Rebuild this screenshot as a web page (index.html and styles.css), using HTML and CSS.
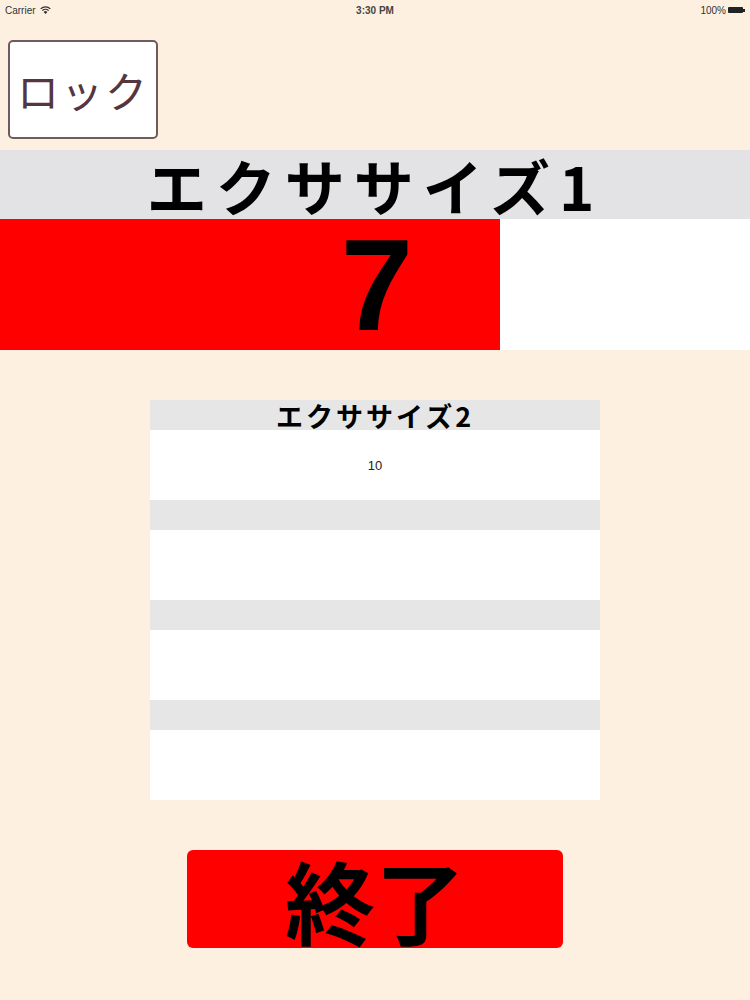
FILE: index.html
```html
<!DOCTYPE html>
<html lang="ja">
<head>
<meta charset="utf-8">
<title>エクササイズ</title>
<link rel="stylesheet" href="styles.css">
</head>
<body>
<div class="status">
  <div class="status-left">Carrier
    <svg class="wifi" width="11" height="8" viewBox="0 0 11 8"><path d="M5.5 8 L3.6 5.9 A2.8 2.8 0 0 1 7.4 5.9 Z M1.9 4.2 A5.2 5.2 0 0 1 9.1 4.2 L8.2 5.1 A4 4 0 0 0 2.8 5.1 Z M0.2 2.4 A7.7 7.7 0 0 1 10.8 2.4 L9.9 3.3 A6.5 6.5 0 0 0 1.1 3.3 Z" fill="#333"/></svg>
  </div>
  <div class="status-center">3:30 PM</div>
  <div class="status-right">100%
    <span class="battery"><span class="battery-body"></span><span class="battery-nub"></span></span>
  </div>
</div>
<div class="top">
  <div class="lock">ロック</div>
</div>
<div class="title">エクササイズ1</div>
<div class="progress">
  <div class="progress-fill" style="width: 66.67%"></div>
  <div class="progress-value">7</div>
</div>
<div class="table">
  <div class="table-head">エクササイズ2</div>
  <div class="table-row">10</div>
  <div class="table-head"></div>
  <div class="table-row"></div>
  <div class="table-head"></div>
  <div class="table-row"></div>
  <div class="table-head"></div>
  <div class="table-row"></div>
</div>
<div class="end-wrap">
  <div class="end">終了</div>
</div>
</body>
</html>
```
FILE: styles.css
```css
html, body {
  margin: 0;
  padding: 0;
}
body {
  background: #fdf0e1;
  width: 750px;
  height: 1000px;
  overflow: hidden;
  font-family: "Liberation Sans", "Noto Sans CJK JP", sans-serif;
}
.status {
  height: 20px;
  display: flex;
  align-items: center;
  justify-content: space-between;
  padding: 0 5px;
  font-size: 10px;
  color: #333;
  position: relative;
}
.status-left {
  display: flex;
  align-items: center;
  gap: 4px;
}
.status-center {
  position: absolute;
  left: 0;
  right: 0;
  text-align: center;
  font-weight: bold;
  color: #444;
}
.status-right {
  display: flex;
  align-items: center;
  gap: 2px;
}
.battery {
  display: flex;
  align-items: center;
}
.battery-body {
  width: 15px;
  height: 6px;
  background: #222;
  border-radius: 1px;
}
.battery-nub {
  width: 2px;
  height: 3px;
  background: #222;
}
.top {
  height: 130px;
  padding: 20px 0 0 8px;
  box-sizing: border-box;
}
.lock {
  width: 150px;
  height: 99px;
  box-sizing: border-box;
  border: 2px solid #6e5c5c;
  border-radius: 5px;
  background: #fff;
  display: flex;
  align-items: center;
  justify-content: center;
  font-family: "Noto Sans CJK JP", sans-serif;
  font-size: 42px;
  letter-spacing: 2px;
  color: #553640;
}
.title {
  height: 69px;
  background: #e3e3e5;
  display: flex;
  align-items: center;
  justify-content: center;
  font-family: "Noto Sans CJK JP", sans-serif;
  font-weight: bold;
  font-size: 60px;
  letter-spacing: 9px;
  color: #000;
  line-height: 1;
}
.progress {
  height: 131px;
  background: #fff;
  position: relative;
  display: flex;
  align-items: center;
  justify-content: center;
}
.progress-fill {
  position: absolute;
  left: 0;
  top: 0;
  bottom: 0;
  background: #ff0000;
}
.progress-value {
  position: relative;
  font-family: "Liberation Sans", sans-serif;
  font-weight: bold;
  font-size: 130px;
  line-height: 0.8;
  color: #000;
  margin-left: 4px;
}
.table {
  width: 450px;
  margin: 50px 0 0 150px;
  background: #fff;
}
.table-head {
  height: 30px;
  background: #e6e6e6;
  display: flex;
  align-items: center;
  justify-content: center;
  font-family: "Noto Sans CJK JP", sans-serif;
  font-weight: bold;
  font-size: 27px;
  letter-spacing: 3px;
  line-height: 1;
  color: #000;
}
.table-row {
  height: 70px;
  display: flex;
  align-items: center;
  justify-content: center;
  font-size: 13px;
  color: #222;
}
.end-wrap {
  margin-top: 50px;
  display: flex;
  justify-content: center;
}
.end {
  width: 376px;
  height: 98px;
  background: #ff0000;
  border-radius: 6px;
  display: flex;
  align-items: center;
  justify-content: center;
  font-family: "Noto Sans CJK JP", sans-serif;
  font-weight: bold;
  font-size: 90px;
  line-height: 1;
  color: #000;
}
```
